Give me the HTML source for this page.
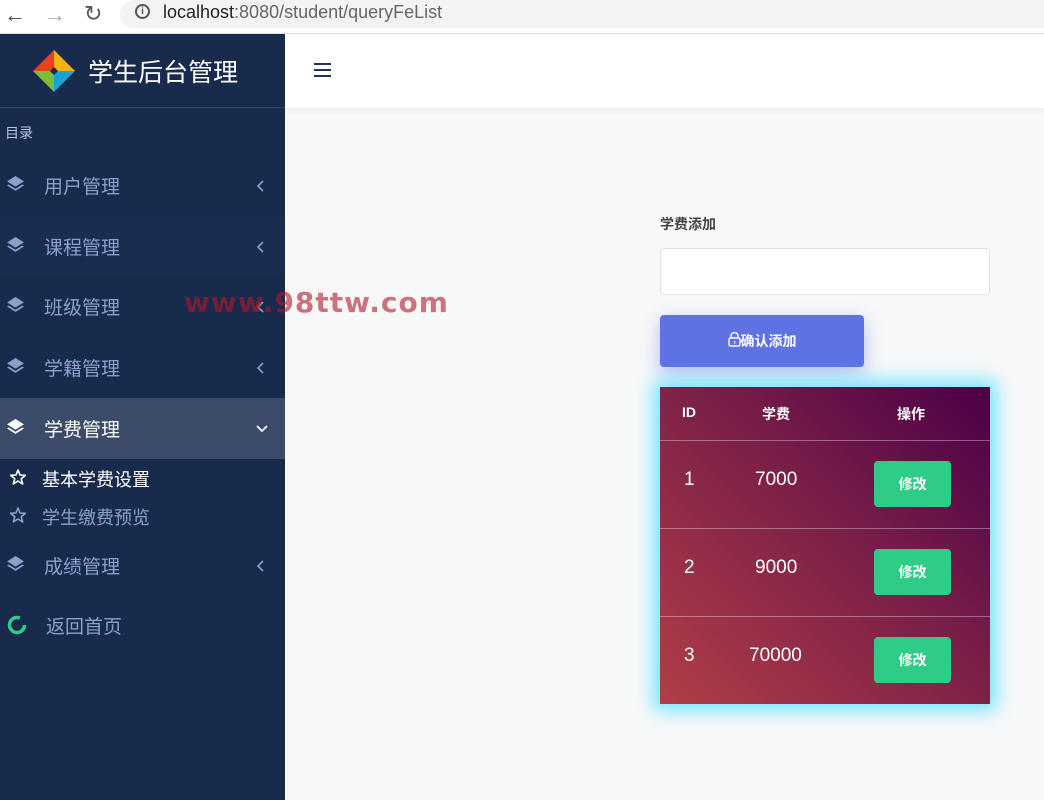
<!DOCTYPE html>
<html><head><meta charset="utf-8"><style>
*{margin:0;padding:0;box-sizing:border-box}
body{width:1044px;height:800px;overflow:hidden;background:#f8f8f9;font-family:"Liberation Sans","Noto Sans CJK SC",sans-serif;position:relative}
.bar{position:absolute;left:0;top:0;width:1044px;height:34px;background:#fff;border-bottom:1px solid #ddd}
.url{position:absolute;left:120px;top:0;width:940px;height:28px;background:#f1f3f4;border-radius:14px 0 0 14px}
.side{position:absolute;left:0;top:34px;width:285px;height:766px;background:#192b4d}
.logo{height:74px;border-bottom:1px solid #34466a;display:flex;align-items:center;padding-left:33px;color:#fff;font-size:25px}
.top{position:absolute;left:285px;top:34px;width:759px;height:74px;background:#fff;box-shadow:0 2px 8px rgba(0,0,0,.06)}
.item{position:absolute;left:0;width:285px;height:61px;color:#8aa0cc;font-size:19px;display:flex;align-items:center}
.item .ic{position:absolute;left:6px;top:20px}
.item .t{position:absolute;left:44px}
.item .ar{position:absolute;left:257px;top:25px}
.sub{position:absolute;left:42px;font-size:18px;color:#8aa0cc}
.sub svg{position:absolute;left:-32px;top:3px}
.wm{position:absolute;left:184px;top:286px;font-size:28px;font-weight:bold;letter-spacing:1px;color:rgba(175,25,40,.6);font-family:"DejaVu Sans",sans-serif}
.tbl{position:absolute;left:660px;top:387px;width:330px;height:317px;background:linear-gradient(225deg,#4c0048 0%,#7a1f48 45%,#b23e47 100%);box-shadow:0 0 18px 6px rgba(60,220,255,.75);color:#fff}
.row{position:absolute;left:0;width:330px;border-top:1px solid rgba(255,255,255,.35)}
.c{position:absolute;font-size:19px}
.btn{position:absolute;left:214px;width:77px;height:46px;background:#2ecc87;border-radius:4px;font-size:14px;font-weight:bold;text-align:center;line-height:46px}
</style></head><body>
<div class="bar"><div class="url"></div>
<div style="position:absolute;left:4px;top:2px;font-size:22px;color:#444">←</div>
<div style="position:absolute;left:44px;top:2px;font-size:22px;color:#aaa">→</div>
<div style="position:absolute;left:84px;top:1px;font-size:22px;color:#555">↻</div>
<div style="position:absolute;left:135px;top:4px;width:15px;height:15px;border:2px solid #555;border-radius:50%;font-size:10px;text-align:center;line-height:11px;font-weight:bold;color:#555">i</div>
<div style="position:absolute;left:163px;top:2px;font-size:18px;color:#222">localhost<span style="color:#666">:8080/student/queryFeList</span></div></div>
<div class="side">
<div class="logo"><svg width="42" height="42" viewBox="0 0 42 42" style="margin-right:13px"><polygon points="21,0 21,17 17,21 0,21" fill="#e8421a"/><polygon points="21,0 42,21 25,21 21,17" fill="#f5b31a"/><polygon points="42,21 21,42 21,25 25,21" fill="#1aa3d8"/><polygon points="0,21 17,21 21,25 21,42" fill="#7bbf3a"/></svg>学生后台管理</div>
<div style="position:absolute;left:5px;top:89px;font-size:14px;color:#b8c4dc">目录</div>
</div>
<div class="top"><div style="position:absolute;left:29px;top:29px;width:17px;height:2px;background:#243256;box-shadow:0 6px 0 #243256,0 12px 0 #243256"></div></div>
<svg width="0" height="0" style="position:absolute"><defs><g id="L"><path d="M9 1 17 6 9 11 1 6Z"/><path d="M2.5 9 1 10 9 15 17 10 15.5 9 9 13Z"/></g><path id="A" d="M6 1 1 6 6 11" fill="none" stroke="currentColor" stroke-width="1.6"/><path id="S" d="M8 1 10 6 15.5 6.3 11.2 9.7 12.7 15 8 12 3.3 15 4.8 9.7 .5 6.3 6 6Z" fill="none" stroke="currentColor" stroke-width="1.6" stroke-linejoin="round"/></defs></svg>
<div class="item" style="top:155px"><svg class="ic" width="19" height="19" viewBox="0 0 18 18" fill="currentColor"><use href="#L"/></svg><span class="t">用户管理</span><svg class="ar" width="8" height="12" viewBox="0 0 8 12"><use href="#A"/></svg></div>
<div class="item" style="top:216px;background:#1a2c4f"><svg class="ic" width="19" height="19" viewBox="0 0 18 18" fill="currentColor"><use href="#L"/></svg><span class="t">课程管理</span><svg class="ar" width="8" height="12" viewBox="0 0 8 12"><use href="#A"/></svg></div>
<div class="item" style="top:276px"><svg class="ic" width="19" height="19" viewBox="0 0 18 18" fill="currentColor"><use href="#L"/></svg><span class="t">班级管理</span><svg class="ar" width="8" height="12" viewBox="0 0 8 12"><use href="#A"/></svg></div>
<div class="item" style="top:337px"><svg class="ic" width="19" height="19" viewBox="0 0 18 18" fill="currentColor"><use href="#L"/></svg><span class="t">学籍管理</span><svg class="ar" width="8" height="12" viewBox="0 0 8 12"><use href="#A"/></svg></div>
<div class="item" style="top:398px;background:#3b4b69;color:#fff"><svg class="ic" width="19" height="19" viewBox="0 0 18 18" fill="currentColor"><use href="#L"/></svg><span class="t">学费管理</span><svg style="position:absolute;left:256px;top:27px" width="12" height="8" viewBox="0 0 12 8"><path d="M1 1 6 6 11 1" fill="none" stroke="#fff" stroke-width="1.8"/></svg></div>
<div class="sub" style="top:466px;color:#fff"><svg width="16" height="16" viewBox="0 0 16 16"><use href="#S"/></svg>基本学费设置</div>
<div class="sub" style="top:504px"><svg width="16" height="16" viewBox="0 0 16 16"><use href="#S"/></svg>学生缴费预览</div>
<div class="item" style="top:535px"><svg class="ic" width="19" height="19" viewBox="0 0 18 18" fill="currentColor"><use href="#L"/></svg><span class="t">成绩管理</span><svg class="ar" width="8" height="12" viewBox="0 0 8 12"><use href="#A"/></svg></div>
<div class="item" style="top:595px"><svg style="position:absolute;left:7px;top:20px" width="20" height="20" viewBox="0 0 20 20"><circle cx="10" cy="10" r="7.5" fill="none" stroke="#2ecc87" stroke-width="3.5" stroke-dasharray="38 9"/></svg><span class="t" style="left:46px">返回首页</span></div>
<div class="wm">www.98ttw.com</div>
<div style="position:absolute;left:660px;top:214px;font-size:14px;font-weight:bold;color:#444">学费添加</div>
<div style="position:absolute;left:660px;top:248px;width:330px;height:47px;background:#fff;border:1px solid #e2e2e2;border-radius:4px"></div>
<div style="position:absolute;left:660px;top:315px;width:204px;height:52px;background:#5e72e4;border-radius:4px;box-shadow:0 6px 18px rgba(94,114,228,.45);color:#fff;font-size:14px;font-weight:bold;text-align:center;line-height:52px"><svg width="13" height="15" viewBox="0 0 13 15" style="vertical-align:-1px"><path d="M3 6V4a3.5 3.5 0 0 1 7 0v2" fill="none" stroke="#fff" stroke-width="1.4"/><rect x="1" y="6" width="11" height="8" rx="1.5" fill="none" stroke="#fff" stroke-width="1.4"/><rect x="6" y="9" width="1.2" height="2.5" fill="#fff"/></svg>确认添加</div>
<div class="tbl">
<div class="c" style="left:22px;top:17px;font-size:14px;font-weight:bold">ID</div>
<div class="c" style="left:102px;top:17px;font-size:14px;font-weight:bold">学费</div>
<div class="c" style="left:237px;top:17px;font-size:14px;font-weight:bold">操作</div>
<div class="row" style="top:53px;height:88px"><div class="c" style="left:24px;top:28px">1</div><div class="c" style="left:95px;top:28px">7000</div><div class="btn" style="top:20px">修改</div></div>
<div class="row" style="top:141px;height:88px"><div class="c" style="left:24px;top:28px">2</div><div class="c" style="left:95px;top:28px">9000</div><div class="btn" style="top:20px">修改</div></div>
<div class="row" style="top:229px;height:88px"><div class="c" style="left:24px;top:28px">3</div><div class="c" style="left:89px;top:28px">70000</div><div class="btn" style="top:20px">修改</div></div>
</div>
</body></html>
